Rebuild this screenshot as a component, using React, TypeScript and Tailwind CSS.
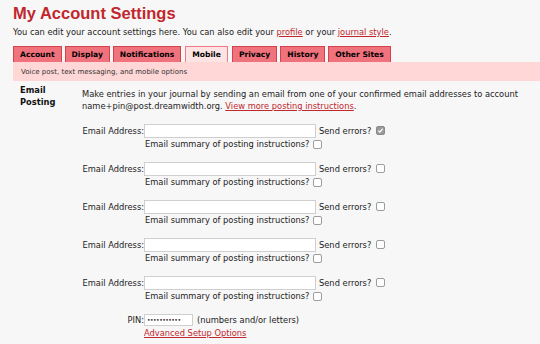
import React from 'react';

const tabs = ['Account', 'Display', 'Notifications', 'Mobile', 'Privacy', 'History', 'Other Sites'];

function Box({ checked }: { checked?: boolean }) {
    return (
        <span
            className={`inline-flex items-center justify-center w-[9px] h-[9px] rounded-[2px] border ${
                checked ? 'bg-[#9a9a9a] border-[#8a8a8a]' : 'bg-white border-[#9c9c9c]'
            }`}
        >
            {checked && (
                <svg width="7" height="7" viewBox="0 0 8 8">
                    <path d="M1.5 4.2 L3.2 5.8 L6.5 2" fill="none" stroke="white" strokeWidth="1.4" />
                </svg>
            )}
        </span>
    );
}

function EmailRow({ checked }: { checked?: boolean }) {
    return (
        <div className="mb-[12px]">
            <div className="flex items-center h-[13px]">
                <span className="w-[62px] text-right whitespace-nowrap">Email Address:</span>
                <span className="w-[172px] h-[14px] bg-white border border-[#cfcfcf]" />
                <span className="ml-[3px]">Send errors?</span>
                <span className="ml-[5px] flex"><Box checked={checked} /></span>
            </div>
            <div className="flex items-center h-[12px] mt-[1px] pl-[63px]">
                <span>Email summary of posting instructions?</span>
                <span className="ml-[4px] flex"><Box /></span>
            </div>
        </div>
    );
}

export default function App() {
    return (
        <div className="w-[540px] h-[344px] overflow-hidden bg-[#f7f7f7] text-[#222] font-['DejaVu_Sans',Verdana,sans-serif] text-[8.3px] leading-[12px] pl-[13px]">
            <h1 className="font-['Liberation_Sans',Arial,sans-serif] font-bold text-[#c1272d] text-[16.5px] leading-[20px] pt-[3px]">
                My Account Settings
            </h1>
            <p className="mt-[3px] whitespace-nowrap">
                You can edit your account settings here. You can also edit your{' '}
                <a className="text-[#c1272d] underline">profile</a> or your{' '}
                <a className="text-[#c1272d] underline">journal style</a>.
            </p>

            {/* Tabs */}
            <div className="flex gap-[3px] mt-[8px] h-[16px]">
                {tabs.map((t) => (
                    <div
                        key={t}
                        className={`px-[6px] flex items-center font-bold text-[7.6px] text-black border border-b-0 ${
                            t === 'Mobile'
                                ? 'bg-[#fde4e4] border-[#f07a84] ml-[1px] mr-[1px]'
                                : 'bg-[#f0727c] border-[#d6424c]'
                        }`}
                    >
                        {t}
                    </div>
                ))}
            </div>
            <div className="bg-[#ffd7d7] h-[19px] flex items-center pl-[8px] text-[7px] text-[#333]">
                Voice post, text messaging, and mobile options
            </div>

            {/* Email posting section */}
            <div className="flex mt-[2px]">
                <div className="w-[69px] pl-[7px] font-bold leading-[12px] pt-[1px] text-[#111]">
                    Email
                    <br />
                    Posting
                </div>
                <div className="flex-1 pt-[5px]">
                    <p className="leading-[12px]">
                        Make entries in your journal by sending an email from one of your confirmed email addresses to account
                        name+pin@post.dreamwidth.org.{' '}
                        <a className="text-[#c1272d] underline">View more posting instructions</a>.
                    </p>
                    <div className="mt-[12px]">
                        <EmailRow checked />
                        <EmailRow />
                        <EmailRow />
                        <EmailRow />
                        <EmailRow />
                    </div>
                    <div className="flex items-center h-[12px] mt-[1px]">
                        <span className="w-[62px] text-right">PIN:</span>
                        <span className="w-[49px] h-[12px] bg-white border border-[#cfcfcf] flex items-center pl-[2px] text-[6px] tracking-[-0.5px]">
                            •••••••••••
                        </span>
                        <span className="ml-[4px]">(numbers and/or letters)</span>
                    </div>
                    <div className="pl-[62px] mt-[1px]">
                        <a className="text-[#c1272d] underline">Advanced Setup Options</a>
                    </div>
                </div>
            </div>
        </div>
    );
}
